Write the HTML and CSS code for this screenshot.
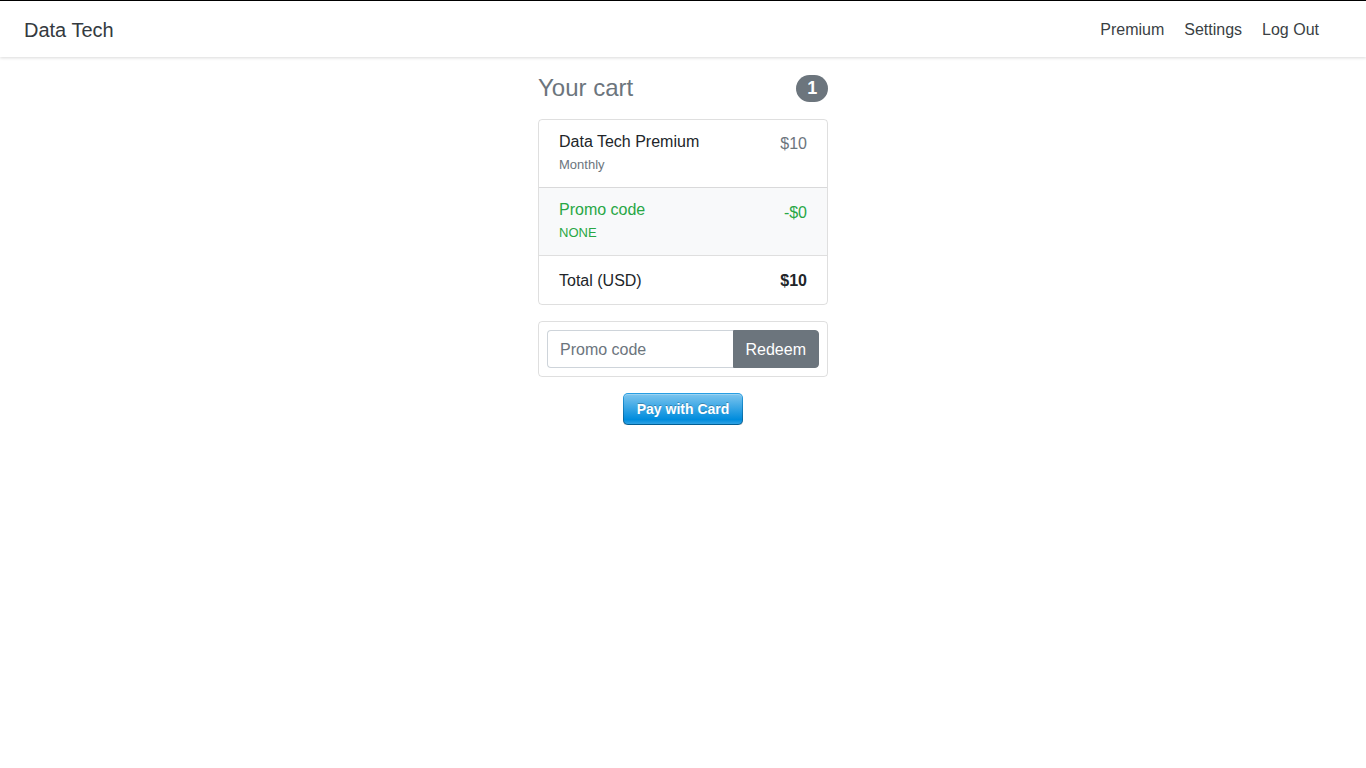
FILE: index.html
```html
<!DOCTYPE html>
<html lang="en">
<head>
<meta charset="utf-8">
<title>Data Tech - Checkout</title>
<link rel="stylesheet" href="styles.css">
</head>
<body>
<nav class="navbar">
  <a class="brand" href="#">Data Tech</a>
  <ul class="nav-links">
    <li><a href="#">Premium</a></li>
    <li><a href="#">Settings</a></li>
    <li><a href="#">Log Out</a></li>
  </ul>
</nav>
<main class="checkout">
  <h4 class="cart-title">
    <span>Your cart</span>
    <span class="badge">1</span>
  </h4>
  <ul class="list-group">
    <li class="list-item condensed">
      <div>
        <h6 class="item-title">Data Tech Premium</h6>
        <small class="muted">Monthly</small>
      </div>
      <span class="price muted">$10</span>
    </li>
    <li class="list-item condensed promo">
      <div>
        <h6 class="item-title">Promo code</h6>
        <small>NONE</small>
      </div>
      <span class="price promo-price">-$0</span>
    </li>
    <li class="list-item total">
      <span>Total (USD)</span>
      <strong>$10</strong>
    </li>
  </ul>
  <form class="promo-card">
    <div class="input-group">
      <input class="form-control" type="text" placeholder="Promo code">
      <button class="btn-secondary" type="button">Redeem</button>
    </div>
  </form>
  <div class="pay-wrap">
    <button class="stripe-button" type="button"><span>Pay with Card</span></button>
  </div>
</main>
</body>
</html>
```
FILE: styles.css
```css
* { box-sizing: border-box; }
html, body { margin: 0; padding: 0; }
body {
  font-family: "Liberation Sans", Arial, sans-serif;
  font-size: 16px;
  line-height: 1.5;
  color: #212529;
  background: #fff;
}
.navbar {
  display: flex;
  align-items: center;
  justify-content: space-between;
  height: 57px;
  border-top: 1px solid #000;
  padding: 2px 47px 0 24px;
  background: #fff;
  box-shadow: 0 1px 3px rgba(0,0,0,.15);
}
.brand {
  font-size: 20px;
  color: #343a40;
  text-decoration: none;
  line-height: 30px;
}
.nav-links {
  display: flex;
  list-style: none;
  margin: 0;
  padding: 0;
  gap: 20px;
}
.nav-links a {
  color: #3a3f44;
  text-decoration: none;
  font-size: 16px;
}
.checkout {
  width: 290px;
  margin: 17px auto 0;
}
.cart-title {
  display: flex;
  justify-content: space-between;
  align-items: center;
  margin: 0 0 16px;
  font-size: 24px;
  font-weight: 400;
  line-height: 1.2;
  color: #6c757d;
}
.badge {
  display: inline-block;
  background: #6c757d;
  color: #fff;
  font-size: 18px;
  font-weight: 700;
  line-height: 1;
  padding: 4.5px 10.8px;
  border-radius: 160px;
}
.list-group {
  list-style: none;
  margin: 0 0 16px;
  padding: 0;
  border: 1px solid rgba(0,0,0,.125);
  border-radius: 4px;
  overflow: hidden;
}
.list-item {
  display: flex;
  justify-content: space-between;
  padding: 12px 20px;
  border-top: 1px solid rgba(0,0,0,.125);
}
.list-item:first-child { border-top: 0; }
.list-item.total { padding: 13px 20px 11px; }
.condensed { line-height: 1.25; }
.item-title {
  margin: 0;
  font-size: 16px;
  font-weight: 500;
  line-height: 1.2;
}
.condensed > div { line-height: 1.5; }
small { font-size: 13px; vertical-align: -1px; }
.price { line-height: 23px; }
.promo-price { line-height: 25px; }
.muted { color: #6c757d; }
.promo { background: #f8f9fa; color: #28a745; }
.promo-card {
  margin: 0 0 16px;
  padding: 8px;
  border: 1px solid rgba(0,0,0,.125);
  border-radius: 4px;
}
.input-group { display: flex; }
.form-control {
  flex: 1 1 auto;
  min-width: 0;
  height: 38px;
  padding: 7px 12px 5px;
  font-family: inherit;
  font-size: 16px;
  color: #495057;
  border: 1px solid #ced4da;
  border-right: 0;
  border-radius: 4px 0 0 4px;
  outline: none;
}
.form-control::placeholder { color: #6c757d; }
.btn-secondary {
  height: 38px;
  padding: 7px 12px 5px;
  font-family: inherit;
  font-size: 16px;
  color: #fff;
  background: #6c757d;
  border: 1px solid #6c757d;
  border-radius: 0 4px 4px 0;
}
.pay-wrap { display: flex; justify-content: center; }
.stripe-button {
  display: inline-block;
  overflow: hidden;
  padding: 1px;
  border: 0;
  border-radius: 5px;
  background-image: linear-gradient(#28a0e5, #015e94);
  box-shadow: 0 1px 0 rgba(0,0,0,.2);
  cursor: pointer;
}
.stripe-button span {
  display: block;
  height: 30px;
  line-height: 30px;
  padding: 0 12px;
  width: 118px;
  border-radius: 4px;
  background-image: linear-gradient(#7dc5ee, #008cdd 85%, #30a2e4);
  box-shadow: inset 0 1px 0 rgba(255,255,255,.25);
  color: #fff;
  font-family: "Liberation Sans", Arial, sans-serif;
  font-size: 14px;
  font-weight: 700;
  text-shadow: 0 -1px 0 rgba(0,0,0,.25);
}
```
